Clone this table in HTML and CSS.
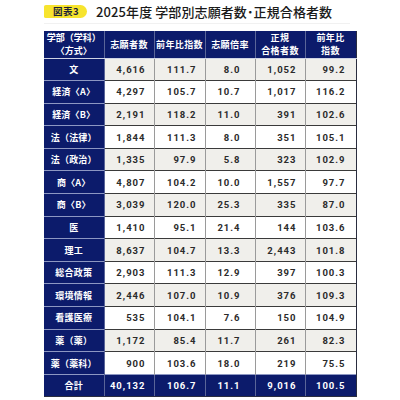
FILE: index.html
```html
<!DOCTYPE html>
<html lang="ja">
<head>
<meta charset="utf-8">
<link rel="stylesheet" href="styles.css">
</head>
<body>
<div class="page">
  <div class="title">
    <span class="badge">図表3</span>
    <span class="heading">2025年度 学部別志願者数<span class="dot">･</span>正規合格者数</span>
  </div>
  <div class="rule"></div>
  <table class="tbl">
    <thead>
      <tr>
        <th class="c1">学部（学科）<br>〈方式〉</th>
        <th class="c2">志願者数</th>
        <th class="c3">前年比指数</th>
        <th class="c4">志願倍率</th>
        <th class="c5">正規<br>合格者数</th>
        <th class="c6">前年比<br>指数</th>
      </tr>
    </thead>
    <tbody>
      <tr class="g"><th>文</th><td>4,616</td><td>111.7</td><td class="r">8.0</td><td>1,052</td><td>99.2</td></tr>
      <tr><th>経済〈A〉</th><td>4,297</td><td>105.7</td><td class="r">10.7</td><td>1,017</td><td>116.2</td></tr>
      <tr class="g"><th>経済〈B〉</th><td>2,191</td><td>118.2</td><td class="r">11.0</td><td>391</td><td>102.6</td></tr>
      <tr><th>法（法律）</th><td>1,844</td><td>111.3</td><td class="r">8.0</td><td>351</td><td>105.1</td></tr>
      <tr class="g"><th>法（政治）</th><td>1,335</td><td>97.9</td><td class="r">5.8</td><td>323</td><td>102.9</td></tr>
      <tr><th>商〈A〉</th><td>4,807</td><td>104.2</td><td class="r">10.0</td><td>1,557</td><td>97.7</td></tr>
      <tr class="g"><th>商〈B〉</th><td>3,039</td><td>120.0</td><td class="r">25.3</td><td>335</td><td>87.0</td></tr>
      <tr><th>医</th><td>1,410</td><td>95.1</td><td class="r">21.4</td><td>144</td><td>103.6</td></tr>
      <tr class="g"><th>理工</th><td>8,637</td><td>104.7</td><td class="r">13.3</td><td>2,443</td><td>101.8</td></tr>
      <tr><th>総合政策</th><td>2,903</td><td>111.3</td><td class="r">12.9</td><td>397</td><td>100.3</td></tr>
      <tr class="g"><th>環境情報</th><td>2,446</td><td>107.0</td><td class="r">10.9</td><td>376</td><td>109.3</td></tr>
      <tr><th>看護医療</th><td>535</td><td>104.1</td><td class="r">7.6</td><td>150</td><td>104.9</td></tr>
      <tr class="g"><th>薬（薬）</th><td>1,172</td><td>85.4</td><td class="r">11.7</td><td>261</td><td>82.3</td></tr>
      <tr><th>薬（薬科）</th><td>900</td><td>103.6</td><td class="r">18.0</td><td>219</td><td>75.5</td></tr>
      <tr class="total"><th>合計</th><td>40,132</td><td>106.7</td><td class="r">11.1</td><td>9,016</td><td>100.5</td></tr>
    </tbody>
  </table>
</div>
</body>
</html>
```

FILE: styles.css
```css
* { box-sizing: border-box; }
html, body { margin: 0; padding: 0; background: #ffffff; }
body {
  font-family: "Noto Sans CJK JP", "Noto Sans", sans-serif;
  color: #222;
}
.page {
  width: 400px;
  height: 400px;
  padding: 4px 0 0 44px;
}
.title {
  display: flex;
  align-items: center;
  gap: 9px;
  height: 14px;
}
.badge {
  display: inline-flex;
  align-items: center;
  justify-content: center;
  width: 43px;
  height: 13px;
  background: #f7e42e;
  border-radius: 2px 7px 7px 2px;
  font-size: 9.5px;
  font-weight: 700;
  color: #1c1f3a;
  letter-spacing: 0.5px;
  padding-left: 1px;
}
.heading {
  font-size: 13px;
  font-weight: 500;
  color: #1a1a1a;
  letter-spacing: 0.1px;
}
.dot { font-weight: 700; }
.rule {
  width: 306px;
  height: 1px;
  margin-top: 5px;
  background: #f1f1f1;
}
.tbl {
  margin-top: 7px;
  border-collapse: collapse;
  table-layout: fixed;
  width: 312px;
}
.c1 { width: 60px; }
.c2 { width: 50px; }
.c3 { width: 51px; }
.c4 { width: 50px; }
.c5 { width: 50px; }
.c6 { width: 51px; }
thead th {
  height: 27px;
  background: #0c1b6b;
  color: #ffffff;
  font-size: 9px;
  font-weight: 700;
  line-height: 13px;
  letter-spacing: 0.4px;
  text-align: center;
  padding: 0;
  border-left: 1px solid #5a6598;
  border-right: 1px solid #5a6598;
  border-bottom: 1px solid #cfd3e4;
}
thead th.c1 { border-left: none; letter-spacing: 0; }
thead th.c6 { border-right: 1.5px solid #2a2d3f; }
tbody th {
  height: 22.6px;
  background: #0c1b6b;
  color: #ffffff;
  font-size: 9px;
  font-weight: 700;
  letter-spacing: 0.2px;
  text-align: center;
  padding: 0;
  border-top: 1px solid #8d97c2;
  border-right: 1px solid #5a6598;
}
tbody td {
  height: 22.6px;
  font-family: "Roboto", "Liberation Sans", sans-serif;
  font-size: 9.5px;
  font-weight: 700;
  letter-spacing: 1px;
  color: #2b2b2b;
  text-align: right;
  padding: 0 8px 0 0;
  border-top: 1.5px solid #3a3a3a;
  border-left: 1px solid #9a9a9a;
  background: #ffffff;
}
tbody td.r { padding-right: 14px; }
tbody td:last-child { padding-right: 10px; border-right: 1.5px solid #2a2d3f; }
tbody tr.g td { background: #f0efeb; }
tbody tr.total th,
tbody tr.total td {
  background: #0c1b6b;
  color: #ffffff;
  border-top: 1.5px solid #8d97c2;
  border-left: 1px solid #5a6598;
  border-bottom: 1.5px solid #2a2d3f;
}
tbody tr.total th { border-left: none; }
```
